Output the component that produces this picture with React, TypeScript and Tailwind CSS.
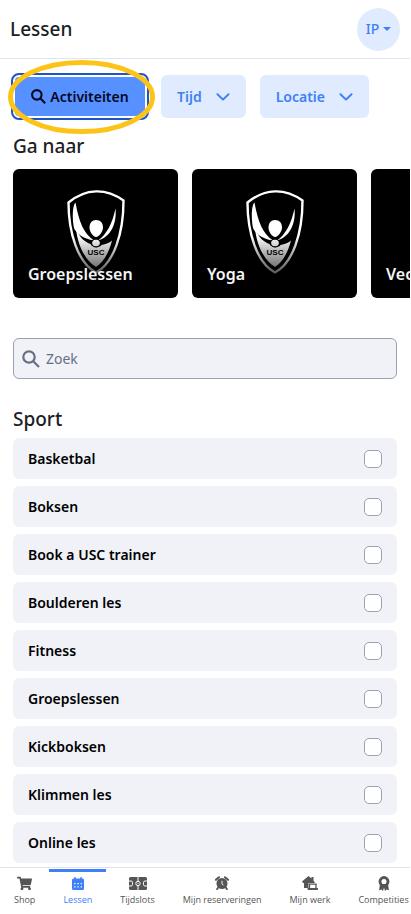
import type { ReactNode } from "react";
import { FaShoppingCart } from "react-icons/fa";

const sports = [
  "Basketbal",
  "Boksen",
  "Book a USC trainer",
  "Boulderen les",
  "Fitness",
  "Groepslessen",
  "Kickboksen",
  "Klimmen les",
  "Online les",
];

function SearchIcon({ className, weight }: { className: string; weight: number }) {
  return (
    <svg viewBox="0 0 18 18" className={className} fill="none" stroke="currentColor" strokeWidth={weight} aria-hidden="true">
      <circle cx="7" cy="7" r="5.7" />
      <path d="M11.2 11.2 17 17" />
    </svg>
  );
}

function Chevron() {
  return (
    <svg viewBox="0 0 14 8" className="h-2 w-3.5" fill="none" stroke="currentColor" strokeWidth="2" strokeLinecap="round" strokeLinejoin="round" aria-hidden="true">
      <path d="M1.5 1.2 7 6.6l5.5-5.4" />
    </svg>
  );
}

function CalendarIcon() {
  return (
    <svg viewBox="0 0 12 13" className="h-[13px] w-3" aria-hidden="true">
      <path fill="currentColor" d="M2.3 0h1.4v1.5h4.6V0h1.4v1.5h.8A1.5 1.5 0 0 1 12 3v8.5a1.5 1.5 0 0 1-1.5 1.5h-9A1.5 1.5 0 0 1 0 11.5V3a1.5 1.5 0 0 1 1.5-1.5h.8z" />
      <path fill="white" d="M2.200 6h1.300v1.300H2.200zM5.400 6h1.300v1.300H5.400zM8.600 6h1.300v1.300H8.600zM2.200 9.200h1.300v1.300H2.200zM5.400 9.200h1.300v1.300H5.400zM8.600 9.200h1.300v1.300H8.600z" />
    </svg>
  );
}

function FieldIcon() {
  return (
    <svg viewBox="0 0 18 13" className="h-[13px] w-[18px]" aria-hidden="true">
      <rect width="18" height="13" rx="1.5" fill="currentColor" />
      <g fill="none" stroke="white" strokeWidth="1">
        <path d="M9 0v13M0 4h2a1.5 1.5 0 0 1 1.5 1.5v2A1.5 1.5 0 0 1 2 9H0M18 4h-2a1.5 1.5 0 0 0-1.5 1.5v2A1.5 1.5 0 0 0 16 9h2" />
        <circle cx="9" cy="6.5" r="2.2" fill="currentColor" />
      </g>
      <circle cx="9" cy="6.5" r="0.6" fill="white" />
    </svg>
  );
}

function AlarmIcon() {
  return (
    <svg viewBox="0 0 14 14" className="size-3.5" aria-hidden="true">
      <circle cx="7" cy="7.5" r="5.5" fill="currentColor" />
      <path d="M.9 3.8 4 1.2M13.1 3.8 10 1.2" stroke="currentColor" strokeWidth="2" strokeLinecap="round" />
      <path d="m3.2 11.5-1.2 1.7M10.8 11.5l1.2 1.7" stroke="currentColor" strokeWidth="1.8" strokeLinecap="round" />
      <path d="M7 4.8v3l1.5 1.5" fill="none" stroke="white" strokeWidth="1" />
    </svg>
  );
}

function HomeWorkIcon() {
  return (
    <svg viewBox="0 0 16 14" className="h-3.5 w-4" aria-hidden="true">
      <path fill="currentColor" d="M6.5 0 0 5.6 1 7h1v5h5.5V7H13L11.5 4.5V1H9.500v1.500z" />
      <path fill="white" d="M6.500 7h9v6h-9z" />
      <path fill="none" stroke="currentColor" strokeWidth="1.3" d="M7.500 12V8.200h6.500V12" />
      <path fill="currentColor" d="M5.500 12H16v1a1 1 0 0 1-1 1H6.500a1 1 0 0 1-1-1z" />
    </svg>
  );
}

function AwardIcon() {
  return (
    <svg viewBox="0 0 12 15" className="h-[15px] w-3" aria-hidden="true">
      <path fill="currentColor" d="M2 8.5 1 14.2l2.5-.7L5 15l1-3.500L7 15l1.500-1.500 2.500.7-1-5.700z" />
      <circle cx="6" cy="5.5" r="4" fill="none" stroke="currentColor" strokeWidth="2.9" />
    </svg>
  );
}

function Shield({ id }: { id: string }) {
  return (
    <svg viewBox="0 0 58 84" className="h-[84px] w-[58px]" aria-hidden="true">
      <defs>
        <linearGradient id={id} x1="0" y1="0" x2="0" y2="84" gradientUnits="userSpaceOnUse">
          <stop offset="0.55" stopColor="#ffffff" />
          <stop offset="0.7" stopColor="#c4c4c4" />
          <stop offset="1" stopColor="#555555" />
        </linearGradient>
      </defs>
      <path
        d="M1.5 12.5C19-2 39-2 56.5 10.5 56.5 43 47 73 29 82.5 11 73 1.5 43 1.5 12.5Z"
        fill="none"
        stroke={`url(#${id})`}
        strokeWidth="2.4"
      />
      <g fill={`url(#${id})`}>
        <path d="M8.5 12.5C12 32 17 44 27 50.5 16 49 9 43 7 38 5 28 5.5 15 8.5 12.5Z" />
        <path d="M48.5 18.5C50 33 44 47 31 50.5 40 44 45 34 48.5 18.5Z" />
        <path d="M29 30C33.5 30 36 33 36 37.5 36 42 32 46.5 29 47 26 46.5 22.5 42 22.5 37.5 22.5 33 25 30 29 30Z" />
        <ellipse cx="29" cy="53" rx="4" ry="3.5" />
        <path d="M9 39C13 48 18 52 23.5 54 25 58 33 58 34.5 55 39 54.5 43 52.5 45 50.5 42 62 37 72 29 77 18 70 11 56 9 39Z" />
      </g>
      <ellipse cx="29" cy="53" rx="4.5" ry="4" fill="none" stroke="black" strokeWidth="1" />
      <text x="29" y="65" textAnchor="middle" className="fill-black font-['Liberation_Sans',sans-serif] text-[8px] font-bold">
        USC
      </text>
    </svg>
  );
}

function Filter({ label }: { label: string }) {
  return (
    <button type="button" className="flex h-[43px] items-center gap-3.5 rounded-md bg-[#e1ebff] px-4 font-semibold text-[#4080f5]">
      {label}
      <Chevron />
    </button>
  );
}

function Card({ title, id }: { title: string; id: string }) {
  return (
    <a href="#" className="flex h-[129px] w-[165px] shrink-0 overflow-hidden rounded-md bg-black">
      <span className="grid w-full">
        <span className="col-start-1 row-start-1 flex justify-center pt-[21px]">
          <Shield id={id} />
        </span>
        <span className="z-10 col-start-1 row-start-1 self-end px-[15px] pb-3 text-base leading-6 font-semibold whitespace-nowrap text-[#f5f5f5]">
          {title}
        </span>
      </span>
    </a>
  );
}

function Tab({ label, icon, active = false }: { label: string; icon: ReactNode; active?: boolean }) {
  return (
    <a
      href="#"
      aria-current={active ? "page" : undefined}
      className={`flex shrink-0 flex-col items-center border-t-[3px] px-3.5 ${
        active ? "border-[#4080f5] text-[#4080f5]" : "border-transparent text-[#555555]"
      }`}
    >
      <span className="flex h-[22px] items-center">{icon}</span>
      <span className="text-[9px] leading-3 whitespace-nowrap">{label}</span>
    </a>
  );
}

export default function App() {
  return (
    <div className="flex h-dvh flex-col overflow-hidden bg-white pr-px font-['Noto_Sans',sans-serif] text-sm text-[#1c2024]">
      <header className="flex h-[59px] shrink-0 items-center justify-between border-b border-[#e1e3f0] px-2.5">
        <h1 className="text-[19px] leading-7 font-medium">Lessen</h1>
        <button type="button" className="flex size-[43px] items-center justify-center gap-1 rounded-full bg-[#e1ebff] font-medium text-[#4080f5]">
          IP
          <svg viewBox="0 0 8 4" className="h-1 w-2" fill="currentColor" aria-hidden="true">
            <path d="M0 0h8L4 4z" />
          </svg>
        </button>
      </header>

      <main className="min-h-0 flex-1 overflow-x-hidden px-[13px] pt-4">
        <div className="flex gap-3.5">
          <div className="relative">
            <button
              type="button"
              className="flex h-[43px] w-[134px] items-center justify-center gap-1 rounded-md border-2 border-white bg-[#5790ff] font-semibold text-[#05081f] outline-2 outline-[#1d55c8]"
            >
              <SearchIcon className="size-[15px]" weight={2.5} />
              Activiteiten
            </button>
            <svg viewBox="0 0 148 76" className="pointer-events-none absolute -top-4 -left-[5px] h-[76px] w-[148px] max-w-none" fill="none" aria-hidden="true">
              <ellipse cx="73.5" cy="38" rx="71" ry="34.5" stroke="#fcc419" strokeWidth="5" />
            </svg>
          </div>
          <Filter label="Tijd" />
          <Filter label="Locatie" />
        </div>

        <h2 className="pt-3.5 text-[19px] leading-7 font-medium">Ga naar</h2>
        <div className="-mr-[13px] flex gap-3.5 overflow-x-auto pt-[9px] [scrollbar-width:none]">
          <Card title="Groepslessen" id="shield-group" />
          <Card title="Yoga" id="shield-yoga" />
          <Card title="Vechtsport" id="shield-combat" />
        </div>

        <label className="mt-10 flex h-[41px] items-center gap-1.5 rounded-md border border-[#98a2b3] bg-[#f0f2f8] px-2 text-[#667085]">
          <SearchIcon className="size-[18px]" weight={2.2} />
          <input type="text" aria-label="Zoek" placeholder="Zoek" className="min-w-0 flex-1 bg-transparent outline-none placeholder:text-[#667085]" />
        </label>

        <h2 className="pt-[26px] text-[19px] leading-7 font-medium">Sport</h2>
        <ul className="flex flex-col gap-[7px] pt-[5px]">
          {sports.map((sport) => (
            <li key={sport}>
              <label className="flex h-[41px] items-center justify-between rounded-md bg-[#f0f2f8] px-[15px] font-semibold text-black">
                {sport}
                <input type="checkbox" className="size-[18px] appearance-none rounded-[5px] border border-[#98a2b3] bg-white checked:bg-[#4080f5]" />
              </label>
            </li>
          ))}
        </ul>
      </main>

      <nav className="flex h-[47px] shrink-0 overflow-hidden border-t border-[#e1e3f0] pt-px font-['Open_Sans',sans-serif]">
        <Tab label="Shop" icon={<FaShoppingCart size={15} />} />
        <Tab label="Lessen" active icon={<CalendarIcon />} />
        <Tab label="Tijdslots" icon={<FieldIcon />} />
        <Tab label="Mijn reserveringen" icon={<AlarmIcon />} />
        <Tab label="Mijn werk" icon={<HomeWorkIcon />} />
        <Tab label="Competities" icon={<AwardIcon />} />
      </nav>
    </div>
  );
}
